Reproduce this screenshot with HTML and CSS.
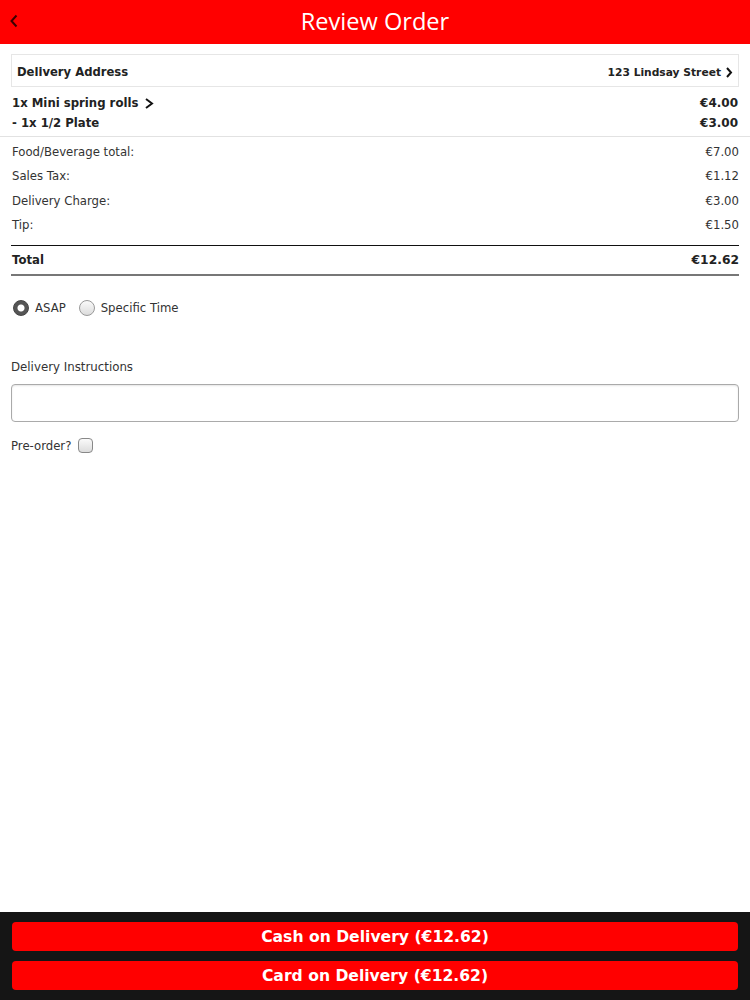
FILE: index.html
```html
<!DOCTYPE html>
<html>
<head>
<meta charset="utf-8">
<link rel="stylesheet" href="styles.css">
</head>
<body>
<div class="page">
  <header class="topbar">
    <span class="back"><svg width="10" height="14" viewBox="0 0 10 14"><path d="M7.5 1.5 L2.5 7 L7.5 12.5" fill="none" stroke="#3a0000" stroke-width="2"/></svg></span>
    <h1 class="title">Review Order</h1>
  </header>
  <main class="content">
    <div class="address">
      <span class="address-label">Delivery Address</span>
      <span class="address-value">123 Lindsay Street <svg class="chev" width="8" height="11" viewBox="0 0 8 11"><path d="M2 1 L6 5.5 L2 10" fill="none" stroke="#111" stroke-width="2"/></svg></span>
    </div>
    <div class="items">
      <div class="item-row"><span class="item-name">1x Mini spring rolls <svg class="chev" width="10" height="11" viewBox="0 0 10 11"><path d="M2 1 L8 5.5 L2 10" fill="none" stroke="#111" stroke-width="2"/></svg></span><span class="price">€4.00</span></div>
      <div class="item-row"><span>- 1x 1/2 Plate</span><span class="price">€3.00</span></div>
    </div>
    <div class="summary">
      <div class="sum-row"><span>Food/Beverage total:</span><span>€7.00</span></div>
      <div class="sum-row"><span>Sales Tax:</span><span>€1.12</span></div>
      <div class="sum-row"><span>Delivery Charge:</span><span>€3.00</span></div>
      <div class="sum-row"><span>Tip:</span><span>€1.50</span></div>
    </div>
    <div class="total-row"><span>Total</span><span class="total-value">€12.62</span></div>
    <div class="timing">
      <label class="radio-opt"><span class="radio checked"></span>ASAP</label>
      <label class="radio-opt"><span class="radio"></span>Specific Time</label>
    </div>
    <div class="instructions-label">Delivery Instructions</div>
    <div class="instructions-input"></div>
    <div class="preorder">Pre-order? <span class="checkbox"></span></div>
  </main>
  <footer class="footer">
    <button class="pay-btn">Cash on Delivery (€12.62)</button>
    <button class="pay-btn">Card on Delivery (€12.62)</button>
  </footer>
</div>
</body>
</html>
```

FILE: styles.css
```css
* { box-sizing: border-box; }
html, body { margin: 0; padding: 0; }
body {
  font-family: "DejaVu Sans", Verdana, sans-serif;
  color: #222;
  background: #fff;
}
.page {
  display: flex;
  flex-direction: column;
  height: 1000px;
}
.topbar {
  height: 44px;
  background: #ff0000;
  display: flex;
  align-items: center;
  justify-content: center;
  position: relative;
}
.back {
  position: absolute;
  left: 9px;
  top: 14px;
  display: flex;
}
.title {
  margin: 0 0 2px 0;
  font-family: "Open Sans", "Liberation Sans", sans-serif;
  font-weight: 400;
  font-size: 23.6px;
  color: #fff;
}
.content {
  flex: 1;
  padding: 10px 11px 0 11px;
}
.address {
  height: 33px;
  border: 1px solid #e6e6e6;
  display: flex;
  align-items: center;
  justify-content: space-between;
  padding: 3px 5px 0 5px;
  font-weight: bold;
}
.address-label { font-size: 11.6px; }
.address-value { font-size: 10.7px; display: flex; align-items: center; gap: 4px; }
.chev { display: inline-block; vertical-align: middle; }
.items {
  padding: 6px 12px 3px 12px;
  margin: 0 -11px;
  border-bottom: 1px solid #e2e2e2;
}
.item-row {
  display: flex;
  justify-content: space-between;
  align-items: center;
  height: 20px;
  font-weight: bold;
  font-size: 11.7px;
}
.item-name .chev { margin-left: 2px; }
.item-row .price { font-size: 12px; }
.summary {
  padding: 3px 0 8px 1px;
}
.sum-row {
  display: flex;
  justify-content: space-between;
  height: 24.3px;
  align-items: center;
  font-size: 11.7px;
  color: #333;
}
.total-row {
  display: flex;
  justify-content: space-between;
  align-items: center;
  height: 31px;
  border-top: 1px solid #111;
  border-bottom: 2px solid #777;
  font-weight: bold;
  font-size: 11.7px;
  padding: 0 0 0 1px;
}
.total-value { font-size: 12.3px; }
.timing {
  display: flex;
  align-items: center;
  gap: 13px;
  margin-top: 24px;
  font-size: 11.7px;
  color: #333;
}
.radio-opt { display: flex; align-items: center; gap: 6px; }
.radio {
  width: 16px;
  height: 16px;
  border-radius: 50%;
  border: 1px solid #999;
  background: linear-gradient(#fafafa, #dcdcdc);
  display: inline-block;
}
.radio-opt:first-child .radio { margin-left: 2px; }
.radio.checked {
  background: radial-gradient(circle, #fff 0 3px, #555 4px);
  border-color: #444;
}
.instructions-label {
  margin-top: 44px;
  font-size: 11.8px;
  color: #333;
}
.instructions-input {
  margin-top: 10px;
  height: 38px;
  border: 1px solid #aaa;
  border-radius: 4px;
  box-shadow: inset 0 1px 2px rgba(0,0,0,0.1);
}
.preorder {
  margin-top: 16px;
  display: flex;
  align-items: center;
  gap: 7px;
  font-size: 11.7px;
  color: #333;
}
.checkbox {
  width: 15px;
  height: 15px;
  border: 1px solid #888;
  border-radius: 4px;
  background: linear-gradient(#fafafa, #dcdcdc);
  display: inline-block;
}
.footer {
  height: 88px;
  background: #151515;
  padding: 10px 12px 0 12px;
  display: flex;
  flex-direction: column;
  gap: 10px;
}
.pay-btn {
  height: 29px;
  border: none;
  border-radius: 4px;
  background: #ff0000;
  color: #fff;
  font-family: "DejaVu Sans", Verdana, sans-serif;
  font-weight: bold;
  font-size: 15.6px;
  padding: 0;
  width: 100%;
}
```
